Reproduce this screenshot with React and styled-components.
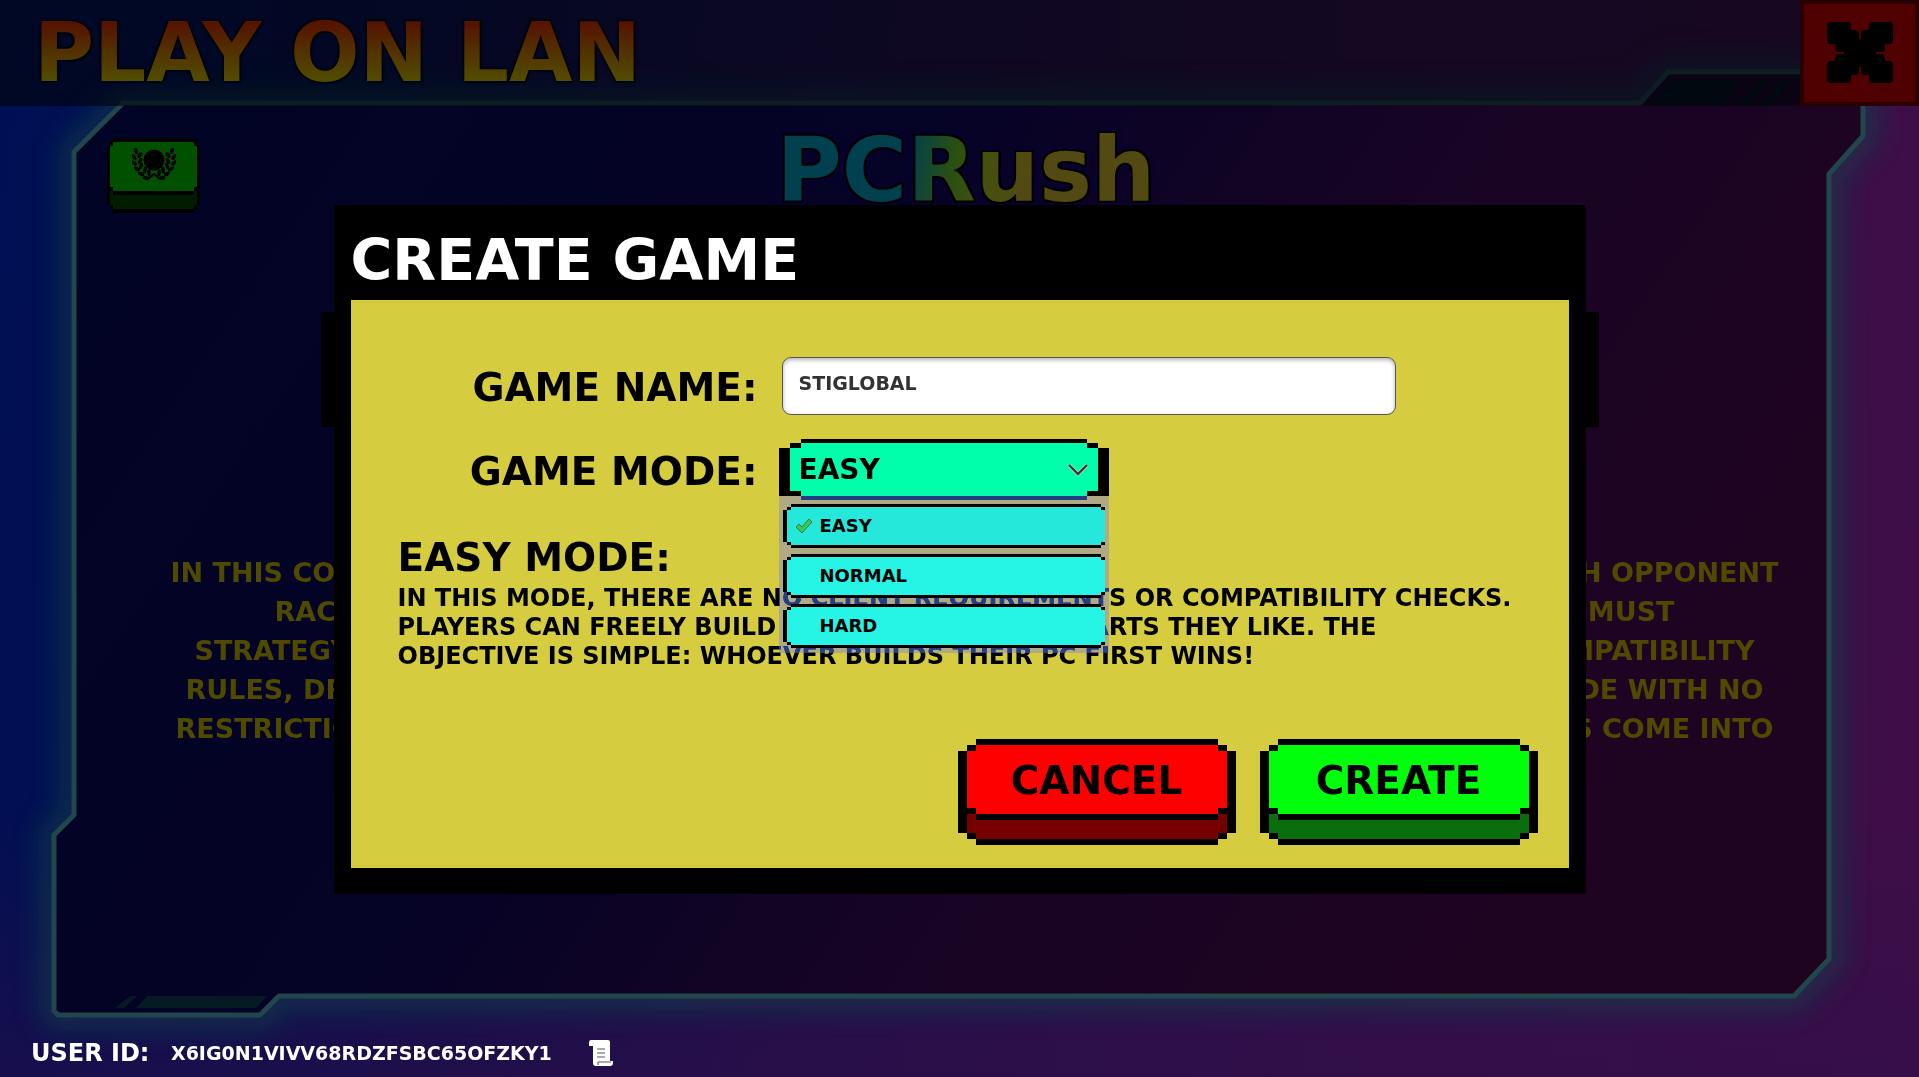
import React, { useState } from "react";
import styled, { createGlobalStyle } from "styled-components";

const GlobalStyle = createGlobalStyle`
  * { box-sizing: border-box; }
  html, body, #root { height: 100%; }
  body {
    margin: 0;
    overflow: hidden;
    background: #0a0a40;
    font-family: "DejaVu Sans", Verdana, sans-serif;
    font-weight: 700;
  }
  h1, h2, h3, p, ul { margin: 0; padding: 0; }
  button, input, select { font: inherit; }
`;

const block = (color, x, top, bottom) =>
  `linear-gradient(${color}, ${color}) ${x}px ${top}px / calc(100% - ${2 * x}px) calc(100% - ${top + bottom}px) no-repeat`;

const raised = ({ face, side, sx, sy, lip }) => `background:
  ${block(face, 2 * sx, sy, lip + 2 * sy)},
  ${block("#000", 2 * sx, sy, lip + sy)},
  ${block(face, sx, 2 * sy, lip + 3 * sy)},
  ${block("#000", sx, 2 * sy, lip + 2 * sy)},
  ${block(side, 2 * sx, sy, sy)},
  ${block(side, sx, 2 * sy, 2 * sy)},
  ${block("#000", 2 * sx, 0, 0)},
  ${block("#000", sx, sy, sy)},
  ${block("#000", 0, 2 * sy, 2 * sy)};`;

const Screen = styled.div`
  position: relative;
  display: flex;
  flex-direction: column;
  height: 100%;
  min-height: 1077px;
  background:
    linear-gradient(to top, rgba(44, 14, 72, 0.5), transparent 24%),
    linear-gradient(97deg, #000f54 0%, #07104e 18%, #240f4a 45%, #360f49 72%, #400e48 100%);
`;

const Frame = styled.svg`
  position: absolute;
  inset: 0;
  width: 100%;
  height: 100%;
`;

const Header = styled.header`
  position: relative;
  display: flex;
  justify-content: space-between;
  height: 106px;
  background: rgba(0, 3, 8, 0.6);
`;

const Title = styled.h1`
  margin-left: 34px;
  font-size: 82px;
  line-height: 106px;
  color: transparent;
  background: linear-gradient(#551400 24px, #523000 50px, #524c00 80px);
  background-clip: text;
  filter: drop-shadow(1px 1px 1px #000) drop-shadow(-1px -1px 1px #000);
`;

const CloseButton = styled.button`
  display: grid;
  place-items: center;
  width: 119px;
  padding: 0;
  border: 4px solid #2a0000;
  background: #4f0000;
`;

const Lobby = styled.main`
  position: relative;
  flex: 1;
`;

const LobbyTop = styled.div`
  display: grid;
  grid-template-columns: 1fr auto 1fr;
  padding: 16px 94px 0 107px;
`;

const AwardsButton = styled.button`
  width: 93px;
  height: 75px;
  margin-top: 16px;
  padding: 0 0 22px;
  border: 0;
  display: grid;
  place-items: center;
  ${raised({ face: "#005000", side: "#001d00", sx: 3, sy: 4, lip: 14 })}
`;

const Logo = styled.h2`
  font-size: 89px;
  line-height: 96px;
  color: transparent;
  background: linear-gradient(100deg, #00404f 34%, #2c5010 47%, #45500f 55%, #524a12 66%);
  background-clip: text;
  filter: drop-shadow(2px 0 0 #000) drop-shadow(-2px 0 0 #000) drop-shadow(0 2px 0 #000)
    drop-shadow(0 -2px 0 #000) drop-shadow(0 0 2px #06004a);
`;

const LobbyStrip = styled.div`
  width: 1278px;
  height: 115px;
  margin: 94px auto 0;
  background: #000;
`;

const Story = styled.div`
  display: flex;
  flex-direction: column;
  align-items: center;
  margin-top: 126px;
  padding-left: 30px;
  font-size: 27px;
  line-height: 39px;
  color: #4f4a00;
`;

const StoryLine = styled.p`
  display: flex;
  justify-content: space-between;
  width: ${(p) => p.$width}px;
`;

const Footer = styled.footer`
  position: relative;
  display: flex;
  align-items: center;
  height: 48px;
  padding-left: 31px;
  color: #fff;
  font-size: 19px;
`;

const UserLabel = styled.span`
  width: 140px;
  font-size: 24px;
`;

const CopyButton = styled.button`
  display: grid;
  margin-left: 36px;
  padding: 0;
  border: 0;
  background: none;
`;

const Overlay = styled.div`
  position: absolute;
  inset: 0;
  display: flex;
  justify-content: center;
  align-items: flex-start;
  padding-top: 205px;
`;

const Dialog = styled.section`
  width: 1252px;
  padding: 0 17px 26px;
  background: #000;
`;

const DialogTitle = styled.h2`
  padding-top: 16px;
  font-size: 57px;
  line-height: 79px;
  color: #fff;
`;

const Form = styled.form`
  display: flex;
  flex-direction: column;
  height: 568px;
  padding: 57px 31px 23px 47px;
  background: #d5cd3f;
  color: #000;
`;

const Field = styled.div`
  display: grid;
  grid-template-columns: 360px 1fr;
  column-gap: ${(p) => p.$gap}px;
  align-items: center;
  margin-bottom: 24px;
`;

const Label = styled.label`
  padding-top: 4px;
  text-align: right;
  font-size: 39px;
  line-height: 54px;
`;

const NameInput = styled.input`
  width: 614px;
  height: 58px;
  padding: 0 16px 6px;
  border: 1px solid #555;
  border-radius: 9px;
  background: #fff;
  box-shadow: inset 0 2px 4px rgba(0, 0, 0, 0.3);
  font-size: 19px;
  color: #333;
  outline: none;
`;

const Picker = styled.div`
  position: relative;
  width: 330px;
  height: 61px;
`;

const Select = styled.select`
  appearance: none;
  width: 100%;
  height: 61px;
  padding: 0 20px 0 20px;
  border: 0;
  outline: none;
  font-size: 28px;
  color: #000;
  background:
    ${block("#00ffab", 22, 4, 4)},
    ${block("#00ffab", 11, 9, 9)},
    ${block("#000", 22, 0, 0)},
    ${block("#000", 11, 4, 4)},
    ${block("#000", 0, 9, 4)};
`;

const Chevron = styled.svg`
  position: absolute;
  top: 24px;
  right: 20px;
  pointer-events: none;
`;

const Menu = styled.ul`
  position: absolute;
  top: 57px;
  left: 0;
  width: 100%;
  display: grid;
  gap: 6px;
  padding: 8px 4px 5px;
  list-style: none;
  &::before, &::after {
    content: "";
    position: absolute;
    inset: 0;
    background: #294c84;
    mix-blend-mode: lighten;
  }
  &::after {
    background: #d3d4ff;
    mix-blend-mode: multiply;
  }
`;

const Option = styled.li`
  position: relative;
  z-index: 1;
  display: flex;
  align-items: center;
  height: 44px;
  padding: 0 0 2px 37px;
  font-size: 18px;
  background:
    linear-gradient(${(p) => p.$face}, ${(p) => p.$face}) 8px 3px / calc(100% - 12px) 38px no-repeat,
    linear-gradient(${(p) => p.$face}, ${(p) => p.$face}) 4px 6px / calc(100% - 4px) 32px no-repeat,
    linear-gradient(#000, #000) 8px 0 / calc(100% - 12px) 100% no-repeat,
    linear-gradient(#000, #000) 4px 3px / calc(100% - 4px) 38px no-repeat,
    linear-gradient(#000, #000) 0 6px / 100% 32px no-repeat;
`;

const Check = styled.svg`
  position: absolute;
  left: 12px;
  top: 14px;
`;

const ModeTitle = styled.h3`
  margin-top: 8px;
  font-size: 39px;
  line-height: 52px;
`;

const ModeText = styled.p`
  font-size: 24px;
  line-height: 29px;
  white-space: nowrap;
`;

const Actions = styled.div`
  display: flex;
  justify-content: flex-end;
  gap: 24px;
  margin-top: auto;
`;

const ActionButton = styled.button`
  width: 278px;
  height: 106px;
  padding: 0 0 24px;
  border: 0;
  font-size: 39px;
  color: #000;
  ${(p) => raised({ face: p.$face, side: p.$side, sx: 9, sy: 6, lip: 19 })}
`;

const story = [
  [1608, "IN THIS COMPETITIVE", "EACH OPPONENT"],
  [1400, "RACE", "YOU MUST"],
  [1560, "STRATEGY", "COMPATIBILITY"],
  [1578, "RULES, DRAW", "MODE WITH NO"],
  [1598, "RESTRICTIONS", "RULES COME INTO"],
];

const leaves = [
  [4, 3, 75], [2, 9, 55], [2, 15, 45], [5, 21, 35], [9, 26, 25], [14, 30, 10],
  [8, 7, 130], [8, 13, 120], [9, 18, 110], [13, 22, 100], [17, 25, 85],
];

function Laurel() {
  const half = leaves.map(([x, y, a]) => (
    <ellipse key={`${x}-${y}`} cx={x} cy={y} rx="3.4" ry="1.8" transform={`rotate(${a} ${x} ${y})`} />
  ));
  return (
    <svg width="44" height="34" viewBox="0 0 44 34" aria-hidden="true">
      <circle cx="22" cy="12" r="10.5" />
      <path d="M16 31 L22 26 L28 31" fill="none" stroke="#000" strokeWidth="2" />
      <g>{half}</g>
      <g transform="translate(44 0) scale(-1 1)">{half}</g>
    </svg>
  );
}

function CloseIcon() {
  return (
    <svg width="66" height="62" viewBox="0 0 66 62" aria-hidden="true">
      <rect x="0" y="0" width="24" height="22" rx="4" />
      <rect x="42" y="0" width="24" height="22" rx="4" />
      <rect x="0" y="39" width="24" height="22" rx="4" />
      <rect x="42" y="39" width="24" height="22" rx="4" />
      <rect x="8" y="8" width="24" height="22" rx="4" />
      <rect x="34" y="8" width="24" height="22" rx="4" />
      <rect x="8" y="32" width="24" height="21" rx="4" />
      <rect x="34" y="32" width="24" height="21" rx="4" />
      <rect x="17" y="17" width="32" height="28" rx="4" />
    </svg>
  );
}

const outline =
  "M123 103 L74 152 V815 L54 835 V1011 L58 1015 H260 L279 996 H1794 L1829 959 V174 L1863 136 V72 H1668 L1640 103 Z";

function Background() {
  return (
    <Frame viewBox="0 0 1919 1077" preserveAspectRatio="none" aria-hidden="true">
      <defs>
        <linearGradient id="panel" x1="0" y1="0" x2="1" y2="0.35">
          <stop offset="0" stopColor="#010426" />
          <stop offset="0.45" stopColor="#050326" />
          <stop offset="0.72" stopColor="#180424" />
          <stop offset="1" stopColor="#1f0422" />
        </linearGradient>
        <filter id="glow" x="-5%" y="-5%" width="110%" height="110%">
          <feGaussianBlur stdDeviation="13" />
        </filter>
      </defs>
      <path d={outline} fill="none" stroke="#10404a" strokeWidth="30" filter="url(#glow)" opacity="0.6" />
      <path d={outline} fill="url(#panel)" stroke="#21464b" strokeWidth="5" />
      <path d="M1670 80 H1740 L1722 106 H1650 Z M1758 80 H1770 L1748 106 H1738 Z M1780 80 H1792 L1770 106 H1760 Z" fill="#03101a" />
      <path d="M130 996 H137 L124 1008 H115 Z M147 996 H267 L256 1008 H136 Z" fill="#051a22" />
    </Frame>
  );
}

export default function App() {
  const [mode, setMode] = useState("EASY");
  const [name, setName] = useState("STIGLOBAL");
  return (
    <>
      <GlobalStyle />
      <Screen>
        <Background />
        <Header>
          <Title>PLAY ON LAN</Title>
          <CloseButton type="button" aria-label="Close"><CloseIcon /></CloseButton>
        </Header>
        <Lobby>
          <LobbyTop>
            <AwardsButton type="button" aria-label="Awards"><Laurel /></AwardsButton>
            <Logo>PCRush</Logo>
          </LobbyTop>
          <LobbyStrip />
          <Story>
            {story.map(([width, start, end]) => (
              <StoryLine key={start} $width={width}>
                <span>{start}</span>
                <span>{end}</span>
              </StoryLine>
            ))}
          </Story>
        </Lobby>
        <Footer>
          <UserLabel>USER ID:</UserLabel>
          <span>X6IG0N1VIVV68RDZFSBC65OFZKY1</span>
          <CopyButton type="button" aria-label="Copy user ID">
            <svg width="26" height="28" viewBox="0 0 26 28" aria-hidden="true">
              <path d="M3 1 H20 Q22 1 22 3 V22 H25 V24 Q25 27 22 27 H8 Q5 27 5 24 V7 H1 V4 Q1 1 3 1 Z" fill="#fff" />
              <path d="M9 10 H17 M9 14 H17 M9 18 H17 M10 26 V23 H23" fill="none" stroke="#555" strokeWidth="1" />
            </svg>
          </CopyButton>
        </Footer>
        <Overlay>
          <Dialog role="dialog" aria-labelledby="dialog-title">
            <DialogTitle id="dialog-title">CREATE GAME</DialogTitle>
            <Form onSubmit={(e) => e.preventDefault()}>
              <Field $gap={24}>
                <Label htmlFor="game-name">GAME NAME:</Label>
                <NameInput id="game-name" value={name} onChange={(e) => setName(e.target.value)} />
              </Field>
              <Field $gap={21}>
                <Label htmlFor="game-mode">GAME MODE:</Label>
                <Picker>
                  <Select id="game-mode" value={mode} onChange={(e) => setMode(e.target.value)}>
                    <option>EASY</option>
                    <option>NORMAL</option>
                    <option>HARD</option>
                  </Select>
                  <Chevron width="22" height="14" viewBox="0 0 22 14" fill="none" aria-hidden="true">
                    <path d="M2 2 L11 11 L20 2" stroke="#8fd8b4" strokeWidth="4" />
                    <path d="M2 2 L11 11 L20 2" stroke="#333" strokeWidth="2" />
                  </Chevron>
                  <Menu role="listbox" aria-label="Game mode">
                    {["EASY", "NORMAL", "HARD"].map((m) => (
                      <Option
                        key={m}
                        role="option"
                        aria-selected={m === mode}
                        $face={m === mode ? "#26e8da" : "#26f4e4"}
                        onClick={() => setMode(m)}
                      >
                        {m === mode && (
                          <Check width="18" height="17" viewBox="0 0 18 17" aria-hidden="true">
                            <path d="M1 9 L4 6 L7 9 L14 1 L17 4 L7 15 Z" fill="#3fc755" stroke="#2a7d4c" strokeWidth="1" />
                          </Check>
                        )}
                        {m}
                      </Option>
                    ))}
                  </Menu>
                </Picker>
              </Field>
              <ModeTitle>EASY MODE:</ModeTitle>
              <ModeText>
                IN THIS MODE, THERE ARE NO CLIENT REQUIREMENTS OR COMPATIBILITY CHECKS.<br />
                PLAYERS CAN FREELY BUILD THEIR PC USING ANY PARTS THEY LIKE. THE<br />
                OBJECTIVE IS SIMPLE: WHOEVER BUILDS THEIR PC FIRST WINS!
              </ModeText>
              <Actions>
                <ActionButton type="button" $face="#ff0000" $side="#760000">CANCEL</ActionButton>
                <ActionButton type="submit" $face="#00ff0b" $side="#0a6e0c">CREATE</ActionButton>
              </Actions>
            </Form>
          </Dialog>
        </Overlay>
      </Screen>
    </>
  );
}
